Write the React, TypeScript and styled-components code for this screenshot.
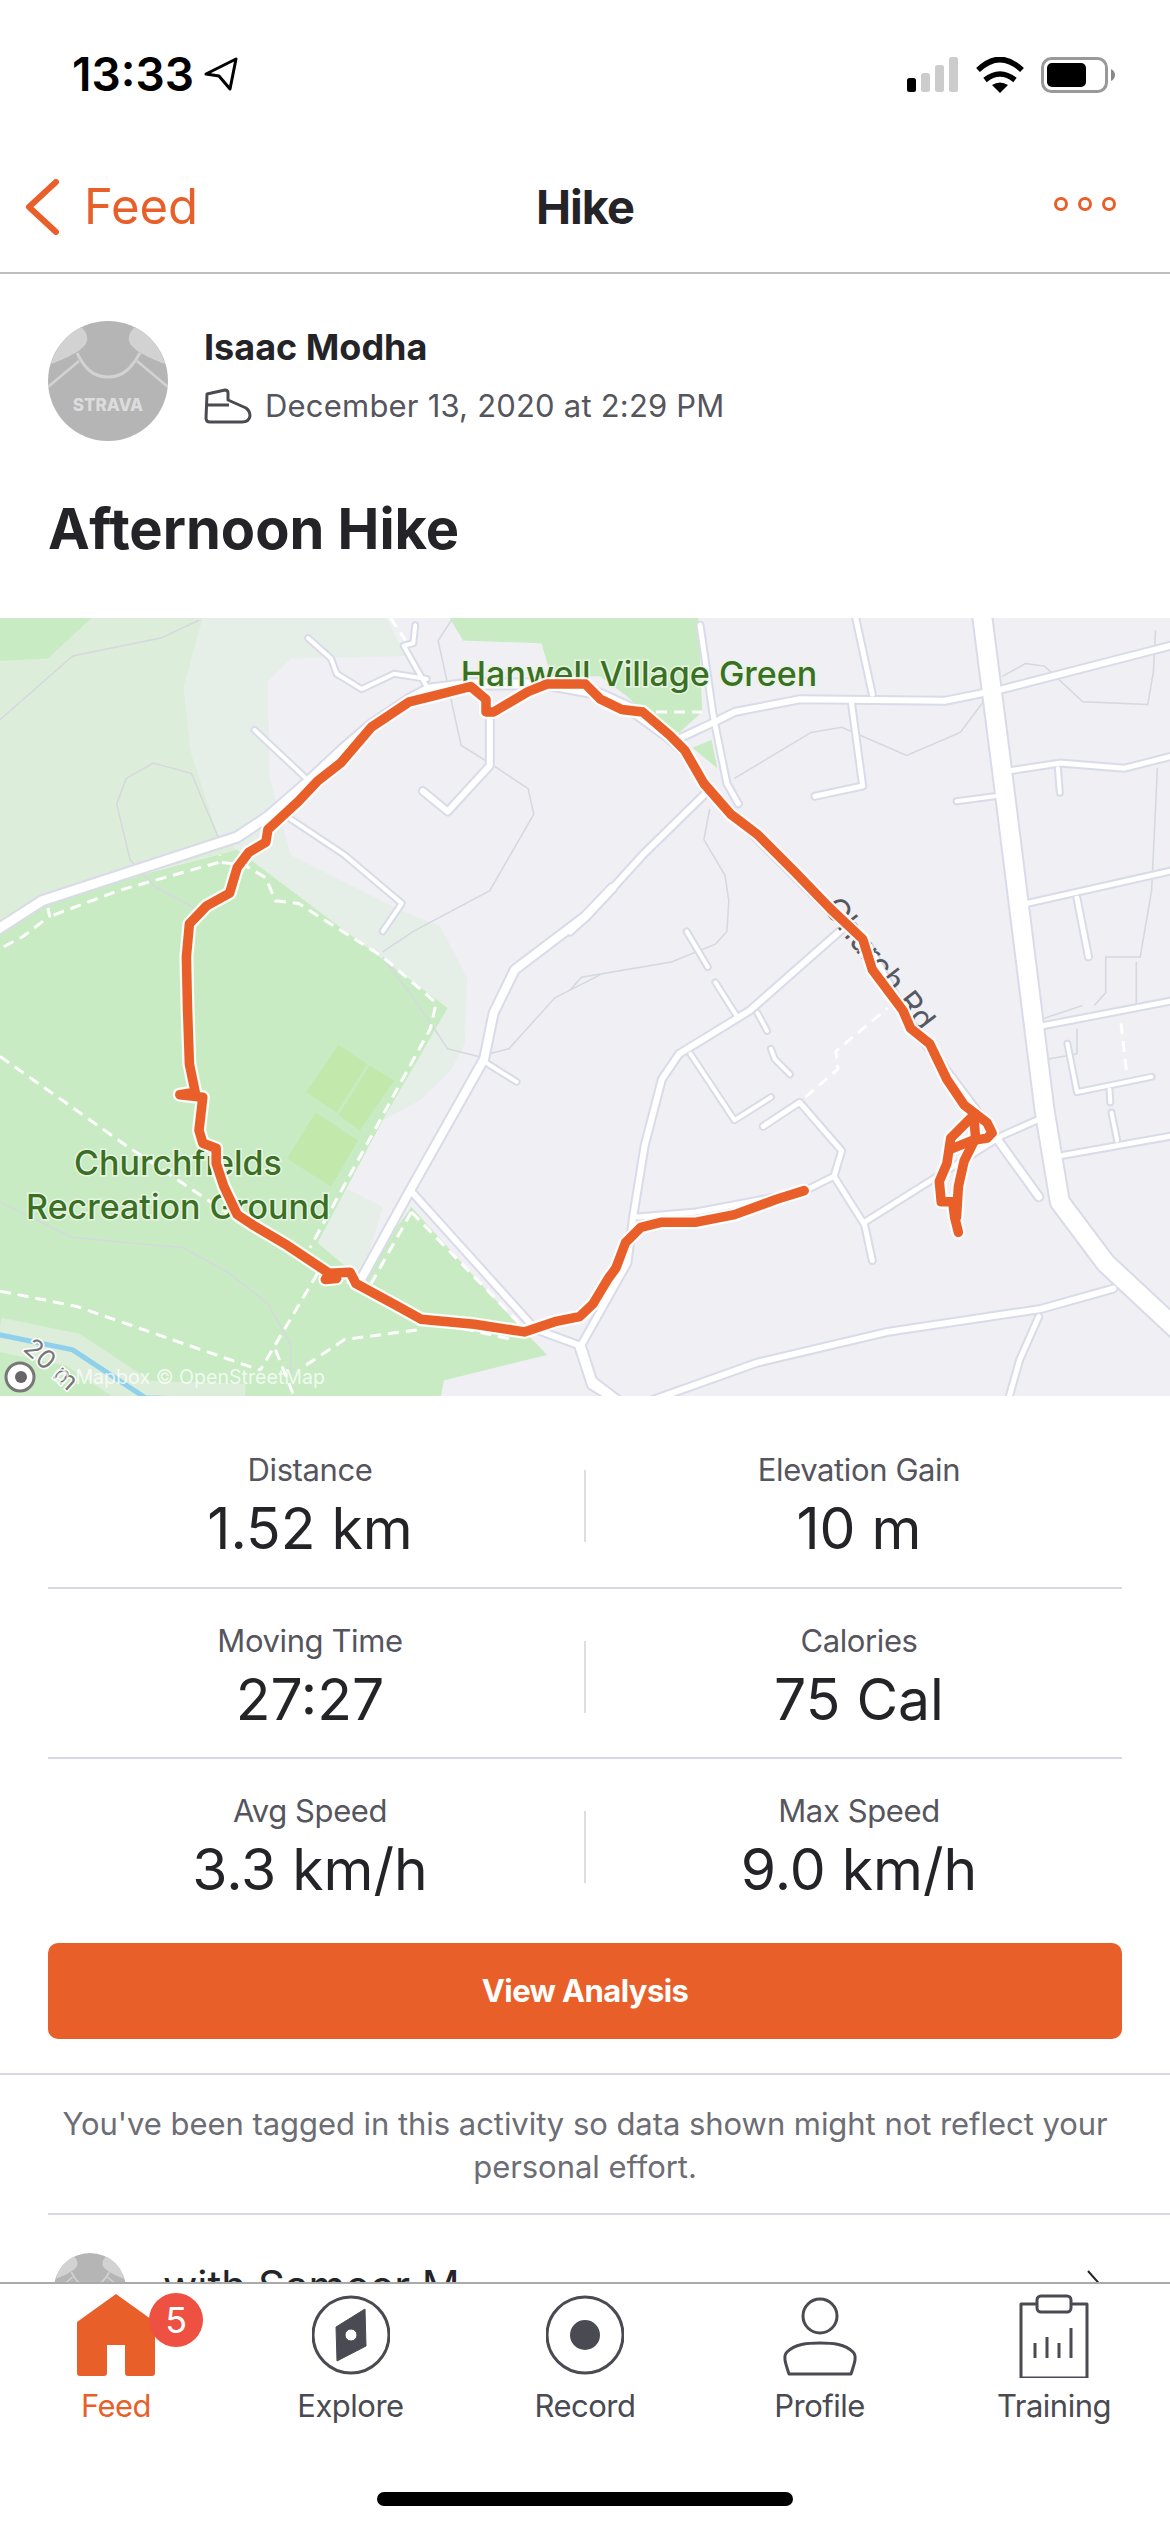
import React from "react";
import styled, { createGlobalStyle } from "styled-components";

type Pt = [number, number];

const ORANGE = "#e95f2a";
const INK = "#242428";
const ICON = "#4a4a52";

// map was traced from crops, so points come in crop units
const west = (pts: Pt[]): Pt[] =>
  pts.map(([x, y]) => [x * (600 / 1568), y * (800 / 1568) - 8]);
const east = (pts: Pt[]): Pt[] =>
  pts.map(([x, y]) => [570 + x * (600 / 1568), y * (800 / 1568) - 8]);
const toPath = (pts: Pt[]) =>
  "M" + pts.map(([x, y]) => `${x.toFixed(1)} ${y.toFixed(1)}`).join("L");
const toPoints = (pts: Pt[]) =>
  pts.map(([x, y]) => `${x.toFixed(1)},${y.toFixed(1)}`).join(" ");

const ROADS: { w: number; pts: Pt[] }[] = [
  { w: 9, pts: west([[-10, 628], [110, 570], [620, 445], [700, 405], [800, 340], [900, 270], [970, 225], [1070, 175], [1120, 155], [1230, 145], [1430, 145], [1568, 165], [1640, 190], [1750, 250], [1780, 270]]) },
  { w: 7, pts: east([[290, 270], [350, 340], [480, 440], [680, 590], [780, 660], [880, 800], [1000, 920], [1100, 1020], [1225, 1150]]) },
  { w: 6, pts: east([[290, 250], [390, 215], [430, 200], [600, 175], [980, 178], [1130, 155], [1440, 95], [1580, 68]]) },
  { w: 4, pts: west([[805, 55], [865, 95], [880, 125], [945, 155], [1030, 125], [1115, 135]]) },
  { w: 4, pts: west([[1085, 30], [1080, 65], [1055, 70], [1115, 150]]) },
  { w: 4, pts: west([[665, 235], [800, 330]]) },
  { w: 4, pts: west([[760, 410], [900, 480], [1050, 575], [1000, 630]]) },
  { w: 6, pts: west([[1280, 210], [1280, 305], [1170, 395], [1105, 355]]) },
  { w: 8, pts: west([[1600, 545], [1530, 600], [1345, 705], [1290, 790], [1265, 880], [1070, 1140], [945, 1310]]) },
  { w: 4, pts: west([[1265, 885], [1350, 925]]) },
  { w: 6, pts: west([[1075, 1140], [1400, 1410], [1510, 1440], [1545, 1520], [1610, 1550]]) },
  { w: 6, pts: east([[0, 630], [45, 600], [190, 480], [360, 355]]) },
  { w: 18, pts: east([[1075, 0], [1130, 320], [1240, 980], [1280, 1160], [1400, 1280], [1600, 1420]]) },
  { w: 5, pts: east([[340, 30], [375, 210], [410, 340], [440, 380]]) },
  { w: 5, pts: east([[745, 10], [790, 165]]) },
  { w: 5, pts: east([[735, 180], [765, 345], [640, 365]]) },
  { w: 5, pts: east([[1150, 315], [1280, 300], [1450, 310], [1580, 285]]) },
  { w: 4, pts: east([[1010, 375], [1110, 365]]) },
  { w: 4, pts: east([[1275, 310], [1280, 358]]) },
  { w: 5, pts: east([[1195, 575], [1580, 510]]) },
  { w: 5, pts: east([[1325, 565], [1355, 680]]) },
  { w: 5, pts: east([[1235, 815], [1580, 765]]) },
  { w: 5, pts: east([[1280, 1070], [1580, 1030]]) },
  { w: 5, pts: east([[770, 1200], [1130, 1030], [1220, 1000]]) },
  { w: 4, pts: east([[1300, 850], [1325, 945], [1520, 915]]) },
  { w: 4, pts: east([[1410, 940], [1412, 965]]) },
  { w: 4, pts: east([[1415, 985], [1430, 1040]]) },
  { w: 6, pts: east([[720, 620], [470, 785], [285, 870], [240, 920], [195, 1050], [165, 1190], [150, 1280], [30, 1440], [60, 1510], [130, 1550]]) },
  { w: 5, pts: east([[175, 1190], [330, 1180], [610, 1140], [690, 1110]]) },
  { w: 5, pts: east([[505, 1012], [600, 965], [710, 1060], [690, 1110], [770, 1205], [790, 1275]]) },
  { w: 4, pts: east([[315, 870], [430, 1000], [525, 955]]) },
  { w: 4, pts: east([[305, 630], [360, 700]]) },
  { w: 4, pts: east([[380, 730], [435, 795]]) },
  { w: 4, pts: east([[490, 790], [515, 825]]) },
  { w: 4, pts: east([[525, 860], [535, 880], [575, 910]]) },
  { w: 6, pts: east([[210, 1550], [490, 1475], [830, 1415], [1230, 1370], [1420, 1330]]) },
  { w: 5, pts: east([[1225, 1385], [1175, 1470], [1145, 1550]]) },
];

const PATHS: Pt[][] = [
  west([[10, 660], [60, 640], [130, 600], [125, 585], [140, 598], [310, 550], [570, 495], [575, 480]]),
  west([[580, 495], [640, 500], [695, 525], [720, 570], [780, 575], [1000, 680], [1140, 770], [1125, 820], [810, 1250]]),
  west([[0, 875], [170, 965], [330, 1050], [630, 1200], [940, 1330], [1100, 1390], [1340, 1430]]),
  west([[0, 1335], [200, 1365], [680, 1490]]),
  west([[830, 1300], [680, 1490]]),
  west([[1075, 1180], [970, 1320]]),
  west([[1075, 1180], [1360, 1400]]),
  west([[800, 1480], [900, 1430], [1100, 1410]]),
  west([[720, 1450], [770, 1544]]),
  west([[1020, 15], [1060, 60]]),
  east([[615, 955], [700, 900], [695, 865], [830, 780]]),
  east([[225, 200], [345, 200]]),
  east([[1440, 810], [1455, 910]]),
];

const CONTOURS: Pt[][] = [
  west([[0, 215], [190, 90], [420, 55], [520, 20]]),
  west([[400, 540], [510, 585]]),
  west([[400, 540], [340, 490], [305, 380], [330, 330], [400, 300], [500, 320], [570, 445]]),
  west([[0, 1160], [190, 1230], [480, 1250], [600, 1300], [700, 1360], [760, 1440], [760, 1500]]),
  west([[1000, 670], [1080, 630], [1280, 550], [1395, 400], [1380, 350], [1300, 310], [1205, 265], [1145, 60], [1180, 20]]),
  west([[1000, 680], [1090, 770], [1170, 860], [1250, 875], [1330, 860], [1450, 760], [1568, 715]]),
  east([[0, 745], [30, 720], [265, 690], [380, 655], [410, 630], [415, 570], [405, 520], [350, 450], [365, 390]]),
  east([[430, 330], [630, 240], [710, 230], [880, 285], [1020, 240], [1080, 180]]),
  east([[1130, 130], [1190, 105], [1240, 110], [1340, 180], [1510, 185], [1525, 120], [1530, 40]]),
  east([[1535, 310], [1520, 550], [1490, 680], [1400, 680], [1400, 750], [1370, 775]]),
  east([[1480, 690], [1480, 770]]),
  east([[1240, 800], [1340, 775]]),
  east([[1250, 880], [1325, 870], [1325, 820]]),
];

const ROUTE: Pt[] = [
  ...east([[612, 1138], [540, 1155], [430, 1185], [330, 1200], [240, 1200], [185, 1210], [145, 1240], [120, 1290], [100, 1310], [60, 1360], [25, 1385]]),
  ...west([[1450, 1395], [1370, 1415], [1240, 1400], [1100, 1390], [1040, 1365], [930, 1320], [915, 1298], [860, 1300], [850, 1312], [880, 1310], [860, 1300], [750, 1245], [660, 1205], [620, 1185], [585, 1130], [565, 1085], [565, 1055], [530, 1045], [520, 1020], [530, 955], [470, 950], [510, 945], [495, 890], [490, 780], [487, 680], [495, 615], [540, 580], [600, 555], [620, 505], [650, 475], [695, 455], [700, 430], [780, 375], [830, 335], [890, 300], [970, 230], [1070, 180], [1125, 170], [1230, 150], [1270, 175], [1270, 200], [1290, 200], [1380, 160], [1430, 145], [1500, 145]]),
  ...east([[40, 145], [80, 175], [135, 195], [190, 200], [260, 245], [300, 275], [350, 340], [420, 400], [490, 440], [590, 515], [680, 585], [765, 645], [790, 705], [870, 785], [890, 820], [940, 850], [985, 920], [1030, 970], [1090, 1005], [1103, 1025], [1090, 1035], [1050, 1040], [1000, 1055]]),
];
const ROUTE_LOOP_A = east([[1055, 990], [995, 1035], [985, 1085], [965, 1120], [970, 1160], [1000, 1160], [1005, 1190], [1015, 1220]]);
const ROUTE_LOOP_B = east([[1055, 990], [1060, 1035], [1030, 1080], [1015, 1130], [1010, 1190]]);
const ROUTE_PIECES = [ROUTE, ROUTE_LOOP_A, ROUTE_LOOP_B];

const PARK_AREAS: { fill: string; pts: Pt[] }[] = [
  { fill: "#dcedda", pts: west([[0, 0], [560, 0], [480, 150], [500, 280], [570, 440], [620, 470], [110, 565], [0, 610]]) },
  { fill: "#c8ebc3", pts: west([[0, 15], [240, 15], [125, 95], [0, 100]]) },
  { fill: "#e5efe8", pts: west([[530, 15], [1010, 15], [1060, 90], [760, 95], [700, 140], [705, 330], [760, 480], [1050, 590], [1150, 620], [1220, 720], [1215, 850], [1180, 900], [1100, 960], [1000, 1000], [830, 1240], [620, 470], [570, 440], [500, 280], [480, 150]]) },
  { fill: "#e5efe8", pts: west([[870, 1120], [1000, 1170], [945, 1305], [820, 1255]]) },
  { fill: "#c8ebc3", pts: west([[-5, 630], [110, 570], [620, 470], [1170, 780], [1000, 1000], [830, 1240], [940, 1310], [1075, 1170], [1340, 1390], [1430, 1460], [1160, 1510], [1150, 1550], [-5, 1550]]) },
  { fill: "#c8ebc3", pts: west([[1175, 15], [1210, 60], [1415, 65], [1440, 130], [1568, 130], [1640, 170], [1720, 230], [1775, 240], [1835, 200], [1825, 15]]) },
  { fill: "#c8ebc3", pts: east([[320, 270], [370, 255], [385, 310]]) },
  { fill: "#c3e8ab", pts: west([[885, 852], [960, 890], [880, 985], [800, 945]]) },
  { fill: "#c3e8ab", pts: west([[965, 893], [1030, 922], [940, 1020], [885, 990]]) },
  { fill: "#c3e8ab", pts: west([[825, 985], [935, 1040], [865, 1130], [750, 1075]]) },
];

const WATER = west([[-5, 1420], [190, 1450], [380, 1544], [640, 1550]]);

const STATS = [
  [{ label: "Distance", value: "1.52 km" }, { label: "Elevation Gain", value: "10 m" }],
  [{ label: "Moving Time", value: "27:27" }, { label: "Calories", value: "75 Cal" }],
  [{ label: "Avg Speed", value: "3.3 km/h" }, { label: "Max Speed", value: "9.0 km/h" }],
];

function Avatar({ size }: { size: number }) {
  return (
    <svg width={size} height={size} viewBox="0 0 120 120">
      <circle cx="60" cy="60" r="60" fill="#b5b5b5" />
      <path d="M33 6C38 10 40 15 39 20C37 28 22 36 3 43C8 26 19 13 33 6Z" fill="#d2d2d2" />
      <path d="M87 6C82 10 80 15 81 20C83 28 98 36 117 43C112 26 101 13 87 6Z" fill="#d2d2d2" />
      <path d="M29 32C36 46 44 56 60 56C76 56 84 46 92 32" fill="none" stroke="#d2d2d2" strokeWidth="3" />
      <path d="M31 40L0 66M89 40L120 66" fill="none" stroke="#d2d2d2" strokeWidth="2.5" />
      <AvatarBrand x="60" y="90">STRAVA</AvatarBrand>
    </svg>
  );
}

function TrailMap() {
  return (
    <MapPanel>
      <svg width="1170" height="778" viewBox="0 0 1170 778">
        <rect width="1170" height="778" fill="#efeff4" />
        {PARK_AREAS.map((a, i) => (
          <polygon key={i} points={toPoints(a.pts)} fill={a.fill} />
        ))}
        <path d={toPath(WATER)} fill="none" stroke="#dcedda" strokeWidth="34" />
        <path d={toPath(WATER)} fill="none" stroke="#8fd0ec" strokeWidth="5" />
        {CONTOURS.map((c, i) => (
          <path key={i} d={toPath(c)} fill="none" stroke="#d5d8df" strokeWidth="1.5" />
        ))}
        {PATHS.map((p, i) => (
          <path key={i} d={toPath(p)} fill="none" stroke="#fff" strokeWidth="3" strokeDasharray="11 7" />
        ))}
        {ROADS.map((r, i) => (
          <path key={i} d={toPath(r.pts)} fill="none" stroke="#d9dbe8" strokeWidth={r.w + 4} strokeLinecap="round" strokeLinejoin="round" />
        ))}
        {ROADS.map((r, i) => (
          <path key={i} d={toPath(r.pts)} fill="none" stroke="#fff" strokeWidth={r.w} strokeLinecap="round" strokeLinejoin="round" />
        ))}
        <PlaceLabel x="639" y="68" textAnchor="middle">Hanwell Village Green</PlaceLabel>
        <PlaceLabel x="178" y="557" textAnchor="middle">Churchfields</PlaceLabel>
        <PlaceLabel x="178" y="601" textAnchor="middle">Recreation Ground</PlaceLabel>
        <StreetLabel transform="translate(822 290) rotate(52)">Church Rd</StreetLabel>
        {ROUTE_PIECES.map((p, i) => (
          <path key={i} d={toPath(p)} fill="none" stroke="#fff" strokeOpacity="0.9" strokeWidth="14" strokeLinejoin="round" strokeLinecap="round" />
        ))}
        {ROUTE_PIECES.map((p, i) => (
          <path key={i} d={toPath(p)} fill="none" stroke={ORANGE} strokeWidth="9.5" strokeLinejoin="round" strokeLinecap="round" />
        ))}
        <ScaleLabel transform="translate(22 732) rotate(42)">20 m</ScaleLabel>
        <circle cx="20" cy="759" r="14" fill="#fff" stroke="#777" strokeWidth="3" />
        <circle cx="21" cy="759" r="6" fill="#666" />
        <Attribution x="52" y="766">© Mapbox © OpenStreetMap</Attribution>
      </svg>
    </MapPanel>
  );
}

const TABS = [
  {
    label: "Feed",
    active: true,
    icon: (
      <path d="M39 0L78 28V79Q78 82 75 82H51Q48 82 48 79V51H30V79Q30 82 27 82H3Q0 82 0 79V28Z" fill={ORANGE} />
    ),
  },
  {
    label: "Explore",
    icon: (
      <>
        <circle cx="39" cy="41" r="38" fill="none" stroke={ICON} strokeWidth="3" />
        <path fillRule="evenodd" d="M53 15L54 52L25 67L24 33ZM39 35A6 6 0 1 0 39 47A6 6 0 1 0 39 35Z" fill={ICON} stroke={ICON} strokeLinejoin="round" strokeWidth="1" />
      </>
    ),
  },
  {
    label: "Record",
    icon: (
      <>
        <circle cx="39" cy="41" r="38" fill="none" stroke={ICON} strokeWidth="3" />
        <circle cx="39" cy="41" r="15" fill={ICON} />
      </>
    ),
  },
  {
    label: "Profile",
    icon: (
      <>
        <ellipse cx="39" cy="22" rx="17" ry="17" fill="none" stroke={ICON} strokeWidth="3" />
        <path d="M8 80C4 68 2 62 6 58C14 50 26 49 39 49C52 49 64 50 72 58C76 62 74 68 70 80Z" fill="none" stroke={ICON} strokeWidth="3" strokeLinejoin="round" />
      </>
    ),
  },
  {
    label: "Training",
    icon: (
      <>
        <path d="M22 10H6V84H72V10H56" fill="none" stroke={ICON} strokeWidth="3" strokeLinejoin="round" />
        <rect x="22" y="2" width="34" height="16" rx="4" fill="none" stroke={ICON} strokeWidth="3" />
        <path d="M20 49V64M32 43V64M44 49V64M56 34V64" fill="none" stroke={ICON} strokeWidth="3" />
      </>
    ),
  },
];

export default function App() {
  return (
    <Screen>
      <GlobalStyle />
      <StatusBar>
        <Clock>
          13:33
          <svg width="34" height="34" viewBox="0 0 34 34">
            <path d="M2 17L32 2L26 32L15 19Z" fill="none" stroke="#000" strokeWidth="3" strokeLinejoin="round" />
          </svg>
        </Clock>
        <StatusIcons>
          <svg width="52" height="36" viewBox="0 0 52 36">
            <rect x="0" y="21" width="9" height="14" rx="2.5" fill="#000" />
            <rect x="14" y="16" width="9" height="19" rx="2.5" fill="#ccc" />
            <rect x="28" y="8" width="9" height="27" rx="2.5" fill="#ccc" />
            <rect x="42" y="0" width="9" height="35" rx="2.5" fill="#ccc" />
          </svg>
          <svg width="48" height="36" viewBox="0 0 48 36">
            <path d="M2 13Q24 -8 46 13M9 23Q24 11 39 23" fill="none" stroke="#000" strokeWidth="5.5" />
            <path d="M16 28Q24 23 32 28L24 36Z" fill="#000" />
          </svg>
          <svg width="74" height="36" viewBox="0 0 74 36">
            <rect x="1.5" y="1.5" width="64" height="33" rx="9" fill="none" stroke="#999" strokeWidth="3" />
            <rect x="6" y="6" width="39" height="24" rx="5" fill="#000" />
            <path d="M70 12Q74 14 74 18Q74 22 70 24Z" fill="#888" />
          </svg>
        </StatusIcons>
      </StatusBar>

      <NavBar>
        <BackLink>
          <svg width="36" height="56" viewBox="0 0 36 56">
            <path d="M32 3L5 28L32 53" fill="none" stroke={ORANGE} strokeWidth="6" strokeLinecap="round" strokeLinejoin="round" />
          </svg>
          Feed
        </BackLink>
        <NavTitle>Hike</NavTitle>
        <MoreDots>
          <span />
          <span />
          <span />
        </MoreDots>
      </NavBar>

      <Content>
        <AthleteRow>
          <Avatar size={120} />
          <div>
            <AthleteName>Isaac Modha</AthleteName>
            <ActivityMeta>
              <svg width="48" height="36" viewBox="0 0 48 36">
                <path d="M3 6L21 2Q24 2 24 5V12L42 20Q46 23 46 28Q45 34 38 34H6Q2 34 2 30ZM2 17H25" fill="none" stroke={ICON} strokeWidth="3" strokeLinejoin="round" />
              </svg>
              December 13, 2020 at 2:29 PM
            </ActivityMeta>
          </div>
        </AthleteRow>
        <ActivityTitle>Afternoon Hike</ActivityTitle>

        <TrailMap />

        <Stats>
          {STATS.map((row, i) => (
            <StatRow key={i} $last={i === STATS.length - 1}>
              <StatCell>
                <StatLabel>{row[0].label}</StatLabel>
                <StatValue>{row[0].value}</StatValue>
              </StatCell>
              <StatDivider />
              <StatCell>
                <StatLabel>{row[1].label}</StatLabel>
                <StatValue>{row[1].value}</StatValue>
              </StatCell>
            </StatRow>
          ))}
        </Stats>

        <AnalysisButton>View Analysis</AnalysisButton>

        <TaggedNotice>
          You've been tagged in this activity so data shown might not reflect your
          <br />
          personal effort.
        </TaggedNotice>

        <WithRow>
          <Avatar size={72} />
          <WithName>with Sameer M</WithName>
          <svg width="20" height="40" viewBox="0 0 20 40">
            <path d="M2 2L18 20L2 38" fill="none" stroke={INK} strokeWidth="2" />
          </svg>
        </WithRow>
      </Content>

      <BottomBar>
        <TabRow>
          {TABS.map((t) => (
            <Tab key={t.label} $active={t.active}>
              <TabIcon>
                <svg width="78" height="84" viewBox="0 0 78 84">
                  {t.icon}
                </svg>
                {t.active && <Badge>5</Badge>}
              </TabIcon>
              {t.label}
            </Tab>
          ))}
        </TabRow>
        <HomeIndicator />
      </BottomBar>
    </Screen>
  );
}

const GlobalStyle = createGlobalStyle`
  html, body {
    margin: 0;
    padding: 0;
    background: #fff;
  }
  body {
    font-family: Inter, "Liberation Sans", sans-serif;
    color: ${INK};
  }
`;

const Screen = styled.div`
  width: 1170px;
  height: 2532px;
  display: flex;
  flex-direction: column;
  background: #fff;
  overflow: hidden;
`;

const StatusBar = styled.div`
  height: 141px;
  flex: none;
  display: flex;
  justify-content: space-between;
  align-items: flex-start;
  padding: 48px 55px 0 72px;
  box-sizing: border-box;
`;

const Clock = styled.div`
  display: flex;
  align-items: center;
  gap: 10px;
  font-size: 46px;
  font-weight: 600;
  line-height: 52px;
  color: #000;
`;

const StatusIcons = styled.div`
  display: flex;
  align-items: center;
  gap: 17px;
  padding-top: 9px;
`;

const NavBar = styled.div`
  height: 133px;
  flex: none;
  display: grid;
  grid-template-columns: 1fr auto 1fr;
  align-items: center;
  padding: 0 54px;
  box-sizing: border-box;
  border-bottom: 2px solid #bdbdbd;
`;

const BackLink = styled.div`
  display: flex;
  align-items: center;
  gap: 24px;
  margin-left: -30px;
  font-size: 49px;
  color: ${ORANGE};
`;

const NavTitle = styled.div`
  font-size: 47px;
  font-weight: 700;
  letter-spacing: -1px;
`;

const MoreDots = styled.div`
  display: flex;
  justify-content: flex-end;
  gap: 10px;
  padding-bottom: 6px;

  span {
    width: 14px;
    height: 14px;
    border: 3px solid ${ORANGE};
    border-radius: 50%;
    box-sizing: border-box;
  }
`;

const Content = styled.div`
  flex: 1;
  min-height: 0;
  overflow: hidden;
`;

const AthleteRow = styled.div`
  display: flex;
  align-items: flex-start;
  gap: 36px;
  padding: 47px 48px 0;
`;

const AthleteName = styled.div`
  font-size: 36px;
  font-weight: 700;
  line-height: 44px;
  margin-top: 4px;
`;

const ActivityMeta = styled.div`
  display: flex;
  align-items: center;
  gap: 13px;
  margin-top: 17px;
  font-size: 31px;
  line-height: 40px;
  letter-spacing: 0.2px;
  color: #55555e;
`;

const ActivityTitle = styled.h1`
  margin: 54px 48px 0;
  font-size: 56px;
  font-weight: 700;
  line-height: 68px;
  height: 123px;
`;

const MapPanel = styled.div`
  height: 778px;

  svg {
    display: block;
  }
`;

const PlaceLabel = styled.text`
  font-family: Inter, "Liberation Sans", sans-serif;
  font-size: 34px;
  font-weight: 500;
  fill: #3a7023;
  stroke: #e8f5e4;
  stroke-width: 3px;
  paint-order: stroke;
`;

const StreetLabel = styled.text`
  font-family: Inter, "Liberation Sans", sans-serif;
  font-size: 32px;
  fill: #55585f;
`;

const ScaleLabel = styled.text`
  font-family: Inter, "Liberation Sans", sans-serif;
  font-size: 26px;
  fill: #777;
  stroke: #fff;
  stroke-width: 3px;
  paint-order: stroke;
`;

const Attribution = styled.text`
  font-family: Inter, "Liberation Sans", sans-serif;
  font-size: 19.6px;
  fill: #fff;
  fill-opacity: 0.75;
`;

const AvatarBrand = styled.text`
  font-family: Inter, "Liberation Sans", sans-serif;
  font-size: 17px;
  font-weight: 800;
  text-anchor: middle;
  fill: #dcdcdc;
`;

const Stats = styled.div`
  margin: 22px 48px 0;
`;

const StatRow = styled.div<{ $last?: boolean }>`
  display: grid;
  grid-template-columns: 1fr 2px 1fr;
  height: 170.5px;
  box-sizing: border-box;
  border-bottom: ${(p) => (p.$last ? "none" : "2px solid #d8d8e4")};
`;

const StatCell = styled.div`
  text-align: center;
  padding-top: 32px;

  &:first-child {
    padding-right: 12px;
  }
  &:last-child {
    padding-left: 10px;
  }
`;

const StatDivider = styled.div`
  height: 72px;
  margin-top: 52px;
  background: #dddde2;
`;

const StatLabel = styled.div`
  font-size: 31px;
  line-height: 40px;
  letter-spacing: -0.4px;
  color: #55555e;
`;

const StatValue = styled.div`
  font-size: 57px;
  line-height: 60px;
  margin-top: 9px;
  color: ${INK};
`;

const AnalysisButton = styled.div`
  margin: 13px 48px 0;
  height: 96px;
  display: flex;
  align-items: center;
  justify-content: center;
  background: ${ORANGE};
  border-radius: 10px;
  color: #fff;
  font-size: 31px;
  font-weight: 700;
  letter-spacing: -0.6px;
`;

const TaggedNotice = styled.div`
  margin-top: 34px;
  height: 140px;
  box-sizing: border-box;
  padding-top: 27px;
  border-top: 2px solid #d8d8e4;
  text-align: center;
  font-size: 31px;
  line-height: 43px;
  letter-spacing: -0.05px;
  color: #6d6d75;
`;

const WithRow = styled.div`
  display: flex;
  align-items: flex-start;
  margin-left: 48px;
  padding: 38px 64px 0 6px;
  border-top: 2px solid #d8d8e4;

  svg:last-child {
    margin: 16px 0 0 auto;
  }
`;

const WithName = styled.div`
  margin: 9px 0 0 37px;
  font-size: 42px;
  line-height: 48px;
`;

const BottomBar = styled.div`
  flex: none;
  height: 250px;
  box-sizing: border-box;
  border-top: 2px solid #aaa;
  background: #fff;
`;

const TabRow = styled.div`
  display: flex;
  justify-content: space-between;
  padding: 10px 37px 0;
`;

const Tab = styled.div<{ $active?: boolean }>`
  width: 158px;
  display: flex;
  flex-direction: column;
  align-items: center;
  gap: 8px;
  font-size: 31px;
  line-height: 40px;
  letter-spacing: -0.5px;
  color: ${(p) => (p.$active ? ORANGE : ICON)};
`;

const TabIcon = styled.div`
  position: relative;
  height: 84px;

  svg {
    display: block;
  }
`;

const Badge = styled.div`
  position: absolute;
  top: -1px;
  left: 72px;
  width: 54px;
  height: 54px;
  border-radius: 50%;
  background: #ee5041;
  color: #fff;
  font-size: 36px;
  line-height: 54px;
  text-align: center;
`;

const HomeIndicator = styled.div`
  width: 416px;
  height: 14px;
  margin: 66px auto 0;
  border-radius: 7px;
  background: #000;
`;
